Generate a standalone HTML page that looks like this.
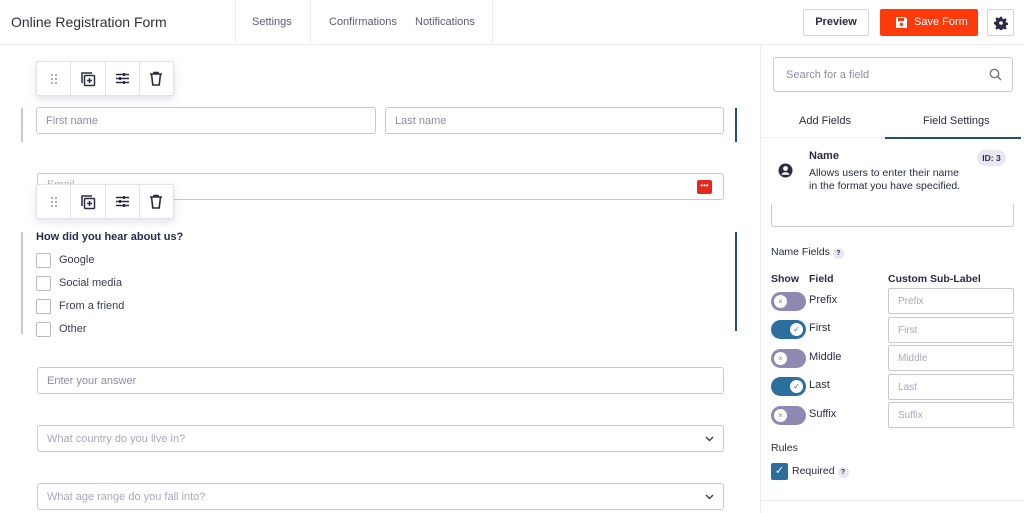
<!DOCTYPE html>
<html><head><meta charset="utf-8"><style>
*{box-sizing:border-box;margin:0;padding:0}
body{width:1024px;height:513px;overflow:hidden;background:#fff;font-family:"Liberation Sans",sans-serif;color:#2b2b45;position:relative}
.a{position:absolute}
.inp{position:absolute;border:1px solid #c9c7dc;border-radius:3px;background:#fff;font-size:11px;color:#8e8ca6;padding-left:9px;display:flex;align-items:center}
.tb{position:absolute;left:36px;width:138px;height:35px;border:1px solid #e2e1ec;background:#fff;box-shadow:0 3px 8px rgba(60,60,110,.15);display:flex;border-radius:2px}
.tb div{flex:1;border-right:1px solid #e2e1ec;display:flex;align-items:center;justify-content:center}
.tb div:last-child{border-right:0}
.cb{position:absolute;left:36px;width:15px;height:15px;border:1px solid #b9b7cf;border-radius:2px}
.cl{position:absolute;left:59px;font-size:11px;color:#3a3a55}
.tg{position:absolute;left:771px;width:35px;height:19px;border-radius:10px;background:#8e89b3}
.tg i{position:absolute;top:3px;width:13px;height:13px;border-radius:50%;background:#fff;font-style:normal;font-size:8px;color:#888;text-align:center;line-height:13px}
.on{background:#2a6f9e}
.fl{position:absolute;left:809px;font-size:11px;color:#2b2b45}
.si{position:absolute;left:888px;width:126px;height:26px;border:1px solid #c9c7dc;border-radius:2px;font-size:10px;color:#a9a7be;padding-left:9px;display:flex;align-items:center}
</style></head><body>
<div class="a" style="left:0;top:0;width:1024px;height:45px;border-bottom:1px solid #ececf2"></div>
<div class="a" style="left:11px;top:14px;font-size:14px;color:#2f2f3f">Online Registration Form</div>
<div class="a" style="left:235px;top:0;width:1px;height:44px;background:#ececf2"></div>
<div class="a" style="left:310px;top:0;width:1px;height:44px;background:#ececf2"></div>
<div class="a" style="left:492px;top:0;width:1px;height:44px;background:#ececf2"></div>
<div class="a" style="left:252px;top:16px;font-size:11px;color:#5b5a7a">Settings</div>
<div class="a" style="left:329px;top:16px;font-size:11px;color:#5b5a7a">Confirmations</div>
<div class="a" style="left:415px;top:16px;font-size:11px;color:#5b5a7a">Notifications</div>
<div class="a" style="left:803px;top:9px;width:66px;height:27px;border:1px solid #d5d4e2;border-radius:2px;font-size:11px;font-weight:bold;color:#2b2b45;text-align:center;line-height:25px">Preview</div>
<div class="a" style="left:880px;top:9px;width:98px;height:27px;background:#ff3a0a;border-radius:2px;color:#fff;font-size:11px;line-height:27px">
<svg class="a" style="left:15px;top:7px" width="13" height="13" viewBox="0 0 13 13"><path d="M1 1h9l2 2v9H1z" fill="#fff"/><rect x="3" y="2" width="6" height="3" fill="#ff3a0a"/><circle cx="6.5" cy="8.5" r="1.7" fill="#ff3a0a"/></svg>
<span class="a" style="left:34px;top:0">Save Form</span></div>
<div class="a" style="left:987px;top:9px;width:27px;height:27px;border:1px solid #d5d4e2;border-radius:2px"><svg class="a" style="left:6px;top:6px" width="14" height="14" viewBox="0 0 14 14"><path fill="#2b2b45" d="M6 0.8h2l.4 1.8 1.3.6 1.6-1 1.4 1.4-1 1.6.6 1.3 1.8.4v2l-1.8.4-.6 1.3 1 1.6-1.4 1.4-1.6-1-1.3.6-.4 1.8H6l-.4-1.8-1.3-.6-1.6 1-1.4-1.4 1-1.6-.6-1.3L0 8V6l1.8-.4.6-1.3-1-1.6 1.4-1.4 1.6 1 1.3-.6z"/><circle cx="7" cy="7" r="1.8" fill="#fff"/></svg></div>

<div class="tb" style="top:61px"><div><svg width="8" height="12"><g fill="#777"><circle cx="2" cy="2" r=".9"/><circle cx="6" cy="2" r=".9"/><circle cx="2" cy="6" r=".9"/><circle cx="6" cy="6" r=".9"/><circle cx="2" cy="10" r=".9"/><circle cx="6" cy="10" r=".9"/></g></svg></div><div><svg width="16" height="16" viewBox="0 0 16 16" fill="none" stroke="#2b2b45" stroke-width="1.5"><path d="M2 12V2h10"/><rect x="4.5" y="4.5" width="10" height="10" rx="1"/><path d="M9.5 7v5M7 9.5h5"/></svg></div><div><svg width="15" height="13" viewBox="0 0 15 13" stroke="#2b2b45" stroke-width="1.5"><path d="M1 2.5h13M1 6.5h13M1 10.5h13"/><path d="M9 1v3M5 5v3M9 9v3" stroke-width="2"/></svg></div><div><svg width="14" height="15" viewBox="0 0 14 15" fill="none" stroke="#2b2b45" stroke-width="1.6"><path d="M1 3h12M5 3V1.5h4V3M2.5 3l1.3 11h6.4L11.5 3"/></svg></div></div>
<div class="a" style="left:21px;top:108px;width:2px;height:34px;background:#c9c7dc"></div>
<div class="a" style="left:735px;top:108px;width:2px;height:34px;background:#1f4e7e"></div>
<div class="inp" style="left:36px;top:107px;width:340px;height:27px">First name</div>
<div class="inp" style="left:385px;top:107px;width:339px;height:27px">Last name</div>
<div class="inp" style="left:37px;top:173px;width:687px;height:27px;align-items:flex-start;padding-top:5px;color:#b0aec4">Email<div class="a" style="left:659px;top:6px;width:15px;height:14px;background:#e5281e;border-radius:2px;color:#fff;font-size:8px;text-align:center;line-height:11px">•••</div></div>
<div class="tb" style="top:184px"><div><svg width="8" height="12"><g fill="#777"><circle cx="2" cy="2" r=".9"/><circle cx="6" cy="2" r=".9"/><circle cx="2" cy="6" r=".9"/><circle cx="6" cy="6" r=".9"/><circle cx="2" cy="10" r=".9"/><circle cx="6" cy="10" r=".9"/></g></svg></div><div><svg width="16" height="16" viewBox="0 0 16 16" fill="none" stroke="#2b2b45" stroke-width="1.5"><path d="M2 12V2h10"/><rect x="4.5" y="4.5" width="10" height="10" rx="1"/><path d="M9.5 7v5M7 9.5h5"/></svg></div><div><svg width="15" height="13" viewBox="0 0 15 13" stroke="#2b2b45" stroke-width="1.5"><path d="M1 2.5h13M1 6.5h13M1 10.5h13"/><path d="M9 1v3M5 5v3M9 9v3" stroke-width="2"/></svg></div><div><svg width="14" height="15" viewBox="0 0 14 15" fill="none" stroke="#2b2b45" stroke-width="1.6"><path d="M1 3h12M5 3V1.5h4V3M2.5 3l1.3 11h6.4L11.5 3"/></svg></div></div>
<div class="a" style="left:21px;top:232px;width:2px;height:102px;background:#c9c7dc"></div>
<div class="a" style="left:735px;top:232px;width:2px;height:99px;background:#1f4e7e"></div>
<div class="a" style="left:36px;top:231px;font-size:11px;font-weight:bold;color:#2b2b45">How did you hear about us?</div>
<div class="cb" style="top:253px"></div><div class="cl" style="top:254px">Google</div>
<div class="cb" style="top:276px"></div><div class="cl" style="top:277px">Social media</div>
<div class="cb" style="top:299px"></div><div class="cl" style="top:300px">From a friend</div>
<div class="cb" style="top:322px"></div><div class="cl" style="top:323px">Other</div>
<div class="inp" style="left:37px;top:367px;width:687px;height:27px">Enter your answer</div>
<div class="inp" style="left:37px;top:425px;width:687px;height:27px;color:#a9a7be">What country do you live in?<svg class="a" style="left:667px;top:10px" width="9" height="6" viewBox="0 0 9 6"><path d="M1 1l3.5 3.5L8 1" fill="none" stroke="#444" stroke-width="1.5"/></svg></div>
<div class="inp" style="left:37px;top:483px;width:687px;height:27px;color:#a9a7be">What age range do you fall into?<svg class="a" style="left:667px;top:10px" width="9" height="6" viewBox="0 0 9 6"><path d="M1 1l3.5 3.5L8 1" fill="none" stroke="#444" stroke-width="1.5"/></svg></div>

<div class="a" style="left:760px;top:45px;width:1px;height:468px;background:#ececf2"></div>
<div class="inp" style="left:773px;top:57px;width:240px;height:35px;padding-left:12px;color:#8e8ca6">Search for a field
<svg class="a" style="left:215px;top:10px" width="13" height="13" viewBox="0 0 13 13" fill="none" stroke="#777" stroke-width="1.4"><circle cx="5.5" cy="5.5" r="4.2"/><path d="M8.5 8.5l3.5 3.5"/></svg></div>
<div class="a" style="left:799px;top:115px;font-size:11px;color:#2b2b45">Add Fields</div>
<div class="a" style="left:923px;top:115px;font-size:11px;color:#2b2b45">Field Settings</div>
<div class="a" style="left:761px;top:137px;width:263px;height:1px;background:#ececf2"></div>
<div class="a" style="left:885px;top:137px;width:136px;height:2px;background:#1f4e7e"></div>
<svg class="a" style="left:778px;top:163px" width="15" height="15" viewBox="0 0 15 15"><circle cx="7.5" cy="7.5" r="7" fill="#2b2b45"/><circle cx="7.5" cy="5.5" r="2.4" fill="#fff"/><path d="M3.3 11.8c1-2 2.5-2.6 4.2-2.6s3.2.6 4.2 2.6" fill="#fff"/></svg>
<div class="a" style="left:809px;top:150px;font-size:11px;font-weight:bold;color:#2b2b45">Name</div>
<div class="a" style="left:809px;top:167px;font-size:10.5px;line-height:13px;color:#2b2b45">Allows users to enter their name<br>in the format you have specified.</div>
<div class="a" style="left:977px;top:150px;width:29px;height:16px;border-radius:8px;background:#e8e7f2;font-size:8.5px;font-weight:bold;text-align:center;line-height:16px">ID: 3</div>
<div class="a" style="left:771px;top:204px;width:243px;height:23px;border:1px solid #c9c7dc;border-top:0;border-radius:0 0 3px 3px"></div>
<div class="a" style="left:771px;top:246px;font-size:10.5px;color:#2b2b45">Name Fields <span style="display:inline-block;width:11px;height:11px;border-radius:50%;background:#e8e7f2;font-size:7px;text-align:center;line-height:11px;font-weight:bold">?</span></div>
<div class="a" style="left:771px;top:273px;font-size:10.5px;font-weight:bold">Show</div>
<div class="a" style="left:809px;top:273px;font-size:10.5px;font-weight:bold">Field</div>
<div class="a" style="left:888px;top:273px;font-size:10.5px;font-weight:bold">Custom Sub-Label</div>
<div class="tg" style="top:292px"><i style="left:3px">×</i></div><div class="fl" style="top:294px">Prefix</div><div class="si" style="top:288px">Prefix</div>
<div class="tg on" style="top:320px"><i style="left:19px;color:#2a6f9e">✓</i></div><div class="fl" style="top:322px">First</div><div class="si" style="top:317px">First</div>
<div class="tg" style="top:349px"><i style="left:3px">×</i></div><div class="fl" style="top:351px">Middle</div><div class="si" style="top:345px">Middle</div>
<div class="tg on" style="top:377px"><i style="left:19px;color:#2a6f9e">✓</i></div><div class="fl" style="top:379px">Last</div><div class="si" style="top:374px">Last</div>
<div class="tg" style="top:406px"><i style="left:3px">×</i></div><div class="fl" style="top:408px">Suffix</div><div class="si" style="top:402px">Suffix</div>
<div class="a" style="left:771px;top:442px;font-size:10.5px">Rules</div>
<div class="a" style="left:771px;top:463px;width:17px;height:17px;background:#2a6f9e;border-radius:2px;color:#fff;font-size:11px;text-align:center;line-height:17px">✓</div>
<div class="a" style="left:792px;top:465px;font-size:10.5px">Required <span style="display:inline-block;width:11px;height:11px;border-radius:50%;background:#e8e7f2;font-size:7px;text-align:center;line-height:11px;font-weight:bold">?</span></div>
<div class="a" style="left:761px;top:500px;width:263px;height:1px;background:#ececf2"></div>
</body></html>
